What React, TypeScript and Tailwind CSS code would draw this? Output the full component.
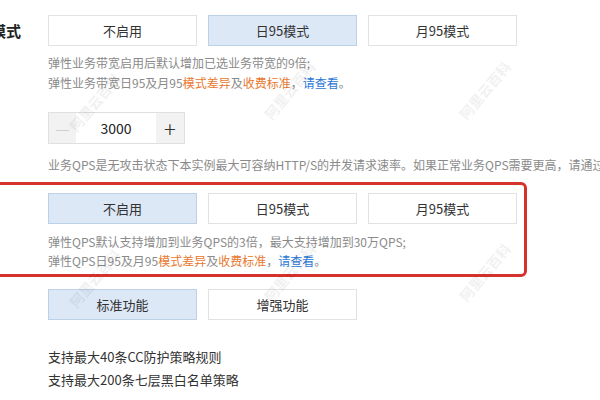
import React from "react";

const Btn = ({ label, selected }: { label: string; selected?: boolean }) => (
  <div
    className={
      "w-[149px] h-[31px] flex items-center justify-center text-[13px] text-[#333] border " +
      (selected ? "bg-[#dce8f6] border-[#bcd0e8]" : "bg-white border-[#e2e2e2]")
    }
  >
    {label}
  </div>
);

const Orange = ({ children }: { children: React.ReactNode }) => (
  <span className="text-[#e8772e]">{children}</span>
);
const Blue = ({ children }: { children: React.ReactNode }) => (
  <span className="text-[#2b78d6]">{children}</span>
);

const marks = [
  { x: 60, y: 92 },
  { x: 255, y: 80 },
  { x: 450, y: 80 },
  { x: 60, y: 268 },
  { x: 255, y: 262 },
  { x: 450, y: 262 },
];

export default function App() {
  return (
    <div className="w-[600px] h-[400px] bg-white relative overflow-hidden font-['Noto_Sans_CJK_SC',sans-serif]">
      {/* Section 1 */}
      <div className="pt-[15px]">
        <div className="flex">
          <div className="w-[48px] h-[31px] flex items-center overflow-hidden">
            <span className="-ml-[9px] text-[15px] font-bold text-[#222] leading-none">模式</span>
          </div>
          <div className="flex gap-[11px]">
            <Btn label="不启用" />
            <Btn label="日95模式" selected />
            <Btn label="月95模式" />
          </div>
        </div>
        <div className="pl-[48px] mt-[7px] text-[12px] leading-[20px] text-[#8a8a8a] whitespace-nowrap">
          <div>弹性业务带宽启用后默认增加已选业务带宽的9倍;</div>
          <div>
            弹性业务带宽日95及月95<Orange>模式差异</Orange>及<Orange>收费标准</Orange>，<Blue>请查看</Blue>。
          </div>
        </div>
        <div className="pl-[48px] mt-[19px]">
          <div className="flex w-[137px] h-[32px] border border-[#e0e0e0]">
            <div className="w-[27px] bg-[#f2f2f2] flex items-center justify-center text-[#c8c8c8] text-[16px] font-light leading-none">
              —
            </div>
            <div className="flex-1 flex items-center justify-center text-[14px] text-[#222]">3000</div>
            <div className="w-[28px] bg-[#f2f2f2] flex items-center justify-center text-[#333] text-[22px] font-light leading-none">
              +
            </div>
          </div>
        </div>
        <div className="pl-[48px] mt-[11px] text-[12px] leading-[20px] text-[#8a8a8a] whitespace-nowrap">
          业务QPS是无攻击状态下本实例最大可容纳HTTP/S的并发请求速率。如果正常业务QPS需要更高，请通过
        </div>
      </div>

      {/* Red highlighted section */}
      <div className="mt-[7px] -ml-[10px] w-[537px] h-[95px] border-[3px] border-[#d6322c] rounded-[6px] pl-[55px] pt-[8px]">
        <div className="flex gap-[11px]">
          <Btn label="不启用" selected />
          <Btn label="日95模式" />
          <Btn label="月95模式" />
        </div>
        <div className="mt-[8px] text-[12px] leading-[19px] text-[#8a8a8a] whitespace-nowrap">
          <div>弹性QPS默认支持增加到业务QPS的3倍，最大支持增加到30万QPS;</div>
          <div>
            弹性QPS日95及月95<Orange>模式差异</Orange>及<Orange>收费标准</Orange>，<Blue>请查看</Blue>。
          </div>
        </div>
      </div>

      {/* Section 3 */}
      <div className="pl-[48px] mt-[12px] flex gap-[11px]">
        <Btn label="标准功能" selected />
        <Btn label="增强功能" />
      </div>
      <div className="pl-[48px] mt-[25px] text-[13px] leading-[23px] text-[#333] whitespace-nowrap">
        <div>支持最大40条CC防护策略规则</div>
        <div>支持最大200条七层黑白名单策略</div>
      </div>

      {/* Watermarks */}
      {marks.map((m, i) => (
        <div
          key={i}
          aria-hidden="true"
          className="absolute pointer-events-none select-none text-[14px] font-bold text-[#000] opacity-[0.05] -rotate-[50deg] whitespace-nowrap"
          style={{ left: m.x, top: m.y }}
        >
          阿里云百科
        </div>
      ))}
    </div>
  );
}
